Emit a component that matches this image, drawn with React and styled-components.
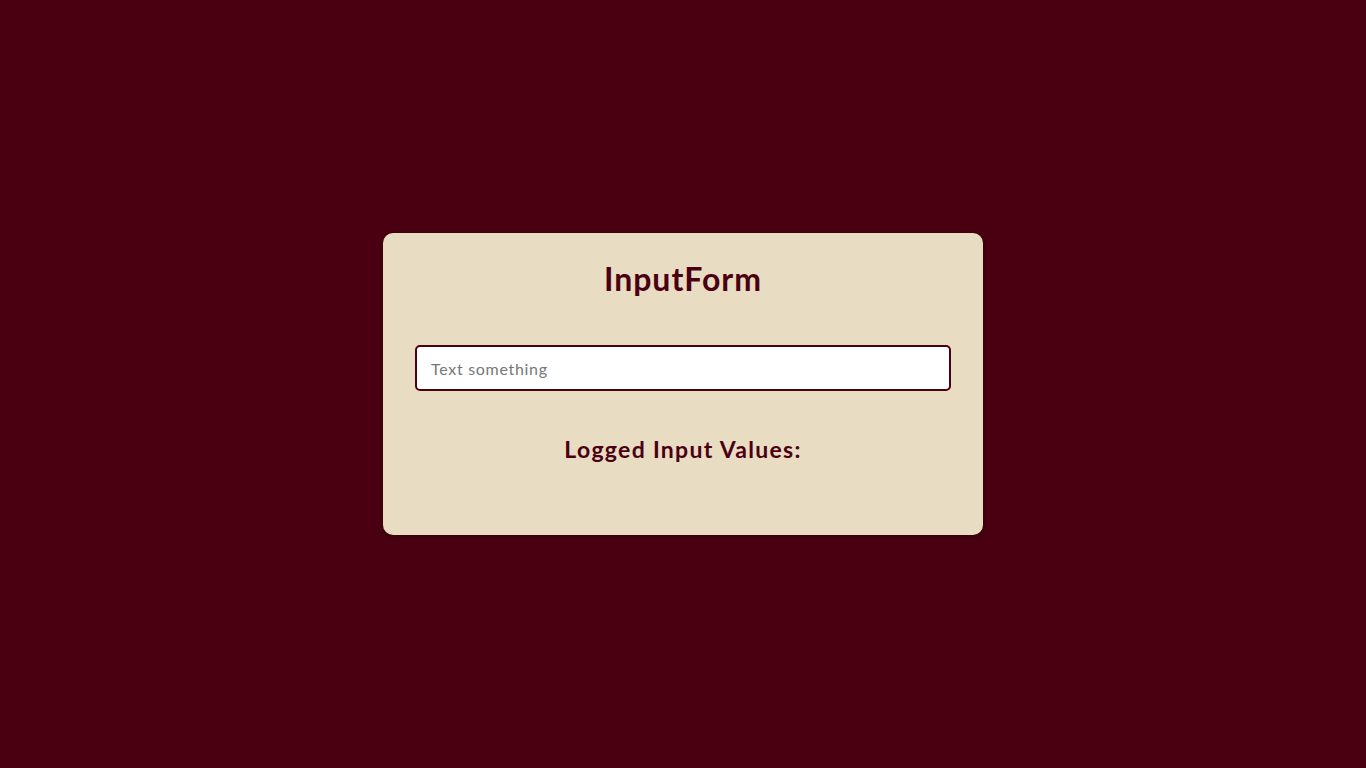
import React, { useState } from 'react';
import styled, { createGlobalStyle } from 'styled-components';

const GlobalStyle = createGlobalStyle`
    body {
        margin: 0;
        background-color: #4a0011;
        font-family: Lato, "Liberation Sans", sans-serif;
    }
`;

const Page = styled.main`
    min-height: 100vh;
    display: flex;
    align-items: center;
    justify-content: center;
`;

const Card = styled.section`
    width: 600px;
    box-sizing: border-box;
    padding: 24px 32px 71px;
    background-color: #e8dcc2;
    border-radius: 10px;
    box-shadow: 0 2px 6px rgba(0, 0, 0, 0.35);
    color: #4a0011;
    text-align: center;
`;

const Title = styled.h1`
    margin: 0 0 44px;
    font-size: 32px;
    line-height: 44px;
    font-weight: 700;
    letter-spacing: 1px;
`;

const TextInput = styled.input`
    display: block;
    width: 100%;
    box-sizing: border-box;
    height: 46px;
    padding: 0 14px;
    border: 2px solid #4a0011;
    border-radius: 5px;
    background: #fff;
    font-family: Lato, "Liberation Sans", sans-serif;
    font-size: 16px;
    letter-spacing: 0.7px;
    color: #333;
    outline: none;

    &::placeholder {
        color: #777;
    }
`;

const LogTitle = styled.h2`
    margin: 43px 0 0;
    font-size: 23px;
    line-height: 30px;
    font-weight: 700;
    letter-spacing: 1.3px;
`;

const LogList = styled.ul`
    margin: 0;
    padding: 0;
    list-style: none;
`;

function App() {
    const [value, setValue] = useState('');
    const [logged, setLogged] = useState([]);

    function handleKey(e) {
        if (e.key === 'Enter' && value.trim()) {
            setLogged([...logged, value]);
            setValue('');
        }
    }

    return (
        <Page>
            <GlobalStyle />
            <Card>
                <Title>InputForm</Title>
                <TextInput
                    placeholder="Text something"
                    value={value}
                    onChange={(e) => setValue(e.target.value)}
                    onKeyDown={handleKey}
                />
                <LogTitle>Logged Input Values:</LogTitle>
                <LogList>
                    {logged.map((item, i) => <li key={i}>{item}</li>)}
                </LogList>
            </Card>
        </Page>
    );
}

export default App;
